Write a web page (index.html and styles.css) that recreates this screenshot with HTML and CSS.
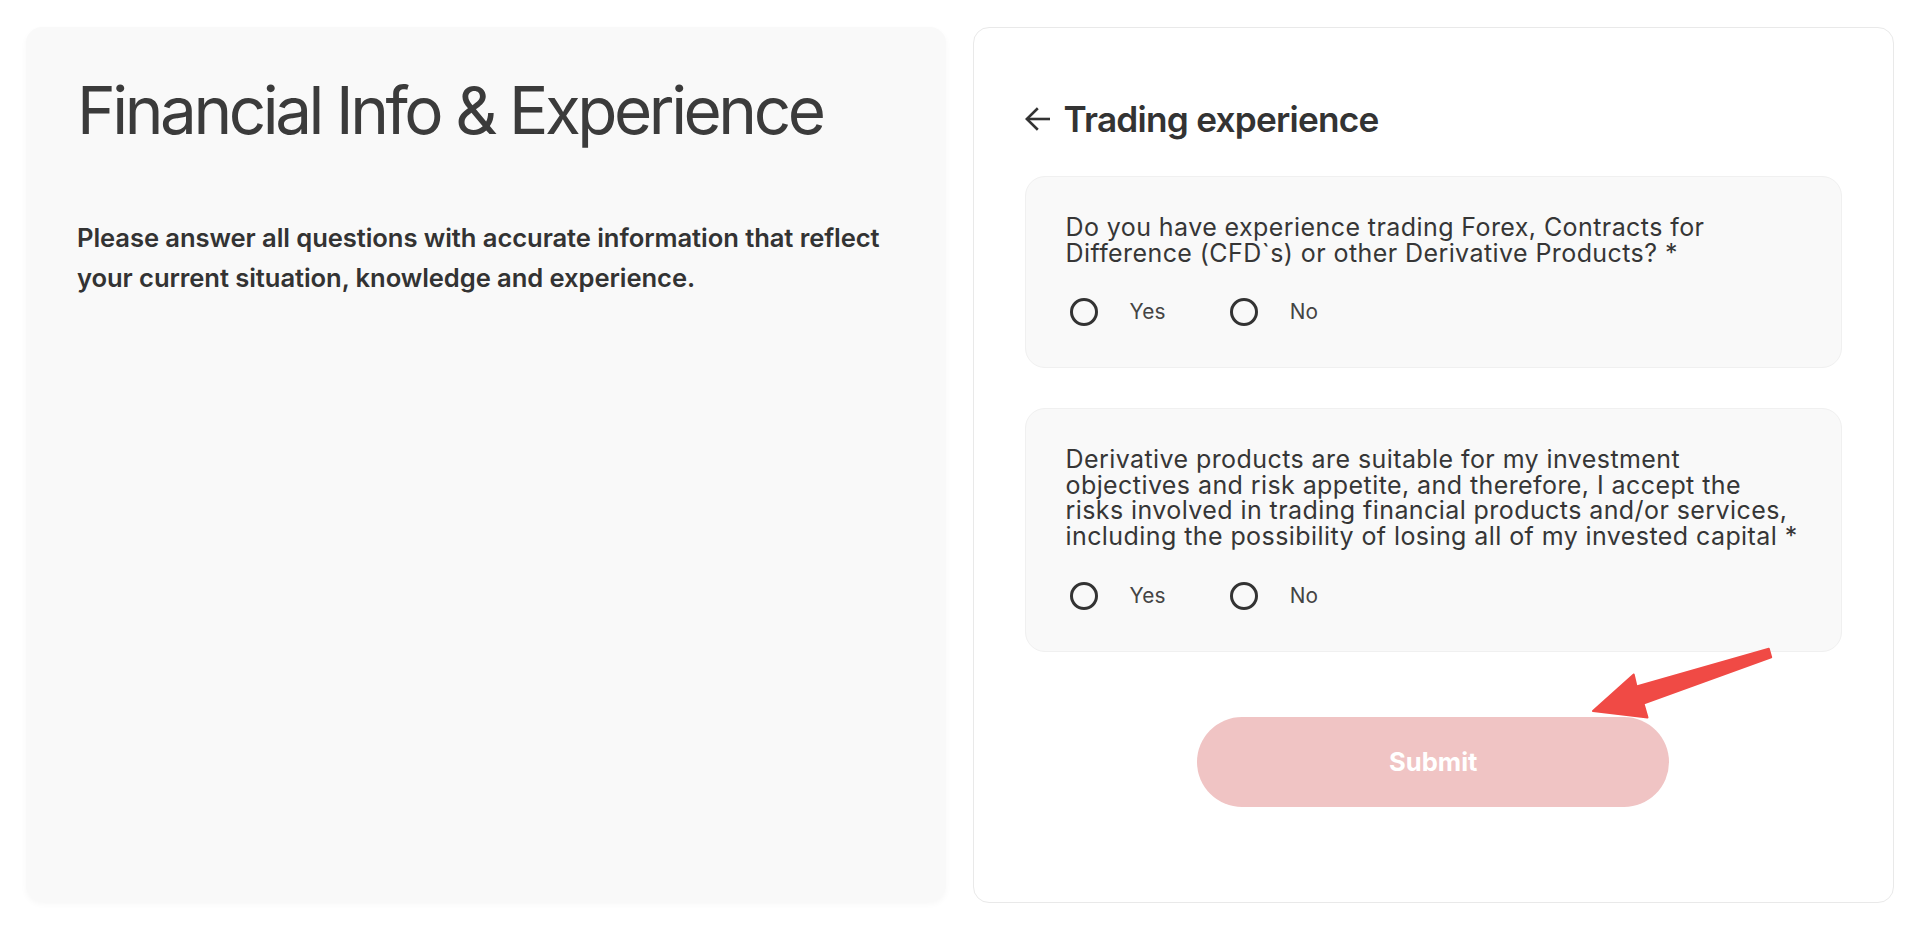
FILE: index.html
```html
<!DOCTYPE html>
<html lang="en">
<head>
<meta charset="utf-8">
<title>Financial Info &amp; Experience</title>
<link rel="stylesheet" href="styles.css">
</head>
<body>
<main class="page">
  <section class="intro">
    <h1 class="intro-title">Financial Info &amp; Experience</h1>
    <p class="intro-text">Please answer all questions with accurate information that reflect your current situation, knowledge and experience.</p>
  </section>

  <section class="form-panel">
    <header class="form-head">
      <button class="back" type="button" aria-label="Back">
        <svg width="26" height="24" viewBox="0 0 26 24" fill="none" stroke="#333" stroke-width="2.6" stroke-linejoin="miter">
          <path d="M25 12H1.8"/>
          <path d="M12.8 1.2L1.8 12l11 10.8"/>
        </svg>
      </button>
      <h2 class="form-title">Trading experience</h2>
    </header>

    <div class="question">
      <p class="q-text">Do you have experience trading Forex, Contracts for Difference (CFD`s) or other Derivative Products? *</p>
      <div class="options">
        <label class="option"><span class="radio"></span><span class="opt-label">Yes</span></label>
        <label class="option"><span class="radio"></span><span class="opt-label">No</span></label>
      </div>
    </div>

    <div class="question">
      <p class="q-text">Derivative products are suitable for my investment objectives and risk appetite, and therefore, I accept the risks involved in trading financial products and/or services, including the possibility of losing all of my invested capital *</p>
      <div class="options">
        <label class="option"><span class="radio"></span><span class="opt-label">Yes</span></label>
        <label class="option"><span class="radio"></span><span class="opt-label">No</span></label>
      </div>
    </div>

    <div class="actions">
      <button class="submit" type="button" disabled>Submit</button>
    </div>
  </section>
</main>

<svg class="annotation" width="1930" height="936" viewBox="0 0 1930 936" aria-hidden="true">
  <polygon points="1768.8,648.8 1636.5,686.5 1633.7,674.5 1593,711 1647.5,717.5 1643.5,703.5 1771.2,657.2" fill="#f04a45" stroke="#f04a45" stroke-width="2" stroke-linejoin="round"/>
</svg>
</body>
</html>
```

FILE: styles.css
```css
* {
  box-sizing: border-box;
}

html, body {
  margin: 0;
  padding: 0;
  background: #ffffff;
}

body {
  position: relative;
  width: 1930px;
  height: 936px;
  overflow: hidden;
  font-family: Inter, "Noto Sans", "Liberation Sans", sans-serif;
  color: #333333;
}

.page {
  display: flex;
  gap: 27px;
  padding: 27px 36px 0 26px;
}

.intro {
  flex: 1 1 0;
  height: 874px;
  background: #f9f9f9;
  border-radius: 16px;
  box-shadow: 0 3px 6px rgba(0, 0, 0, 0.035);
  padding: 51px 51px 0 51px;
}

.intro-title {
  margin: 0;
  font-size: 65.6px;
  line-height: 1;
  font-weight: 400;
  color: #3b3b3b;
  letter-spacing: -3.45px;
  white-space: nowrap;
}

.intro-text {
  margin: 74px 0 0 0;
  font-size: 25.6px;
  line-height: 40px;
  font-weight: 600;
  color: #333333;
  letter-spacing: -0.08px;
}

.form-panel {
  flex: 1 1 0;
  height: 876px;
  background: #ffffff;
  border: 1px solid #e9e9e9;
  border-radius: 16px;
  padding: 70px 51px 0 51px;
}

.form-head {
  display: flex;
  align-items: center;
  gap: 13px;
  height: 42px;
  margin-bottom: 36px;
}

.back {
  display: flex;
  align-items: center;
  justify-content: center;
  padding: 0;
  border: 0;
  background: transparent;
  width: 26px;
  height: 24px;
  cursor: pointer;
}

.form-title {
  margin: 0;
  font-size: 35.2px;
  line-height: 42px;
  font-weight: 600;
  color: #333333;
  letter-spacing: -0.75px;
}

.question {
  background: #f9f9f9;
  border: 1px solid #f0f0f0;
  border-radius: 20px;
  padding: 38px 40px 41px 40px;
}

.question + .question {
  margin-top: 40px;
}

.q-text {
  margin: 0 -4px 32px 0;
  font-size: 25px;
  line-height: 25.6px;
  font-weight: 400;
  color: #363636;
  letter-spacing: 0.42px;
}

.options {
  display: flex;
  align-items: center;
  gap: 64px;
  height: 28px;
  padding-left: 4px;
}

.option {
  display: flex;
  align-items: center;
  gap: 32px;
  cursor: pointer;
}

.radio {
  width: 28px;
  height: 28px;
  border: 3px solid #333333;
  border-radius: 50%;
}

.opt-label {
  font-size: 20.8px;
  line-height: 28px;
  color: #444444;
  letter-spacing: 0.2px;
}

.actions {
  display: flex;
  justify-content: center;
  margin-top: 65px;
}

.submit {
  width: 472px;
  height: 90px;
  border: 0;
  border-radius: 45px;
  background: #f0c4c4;
  color: #ffffff;
  font-family: Inter, "Noto Sans", "Liberation Sans", sans-serif;
  font-size: 25.6px;
  font-weight: 700;
}

.annotation {
  position: absolute;
  left: 0;
  top: 0;
  pointer-events: none;
}
```
